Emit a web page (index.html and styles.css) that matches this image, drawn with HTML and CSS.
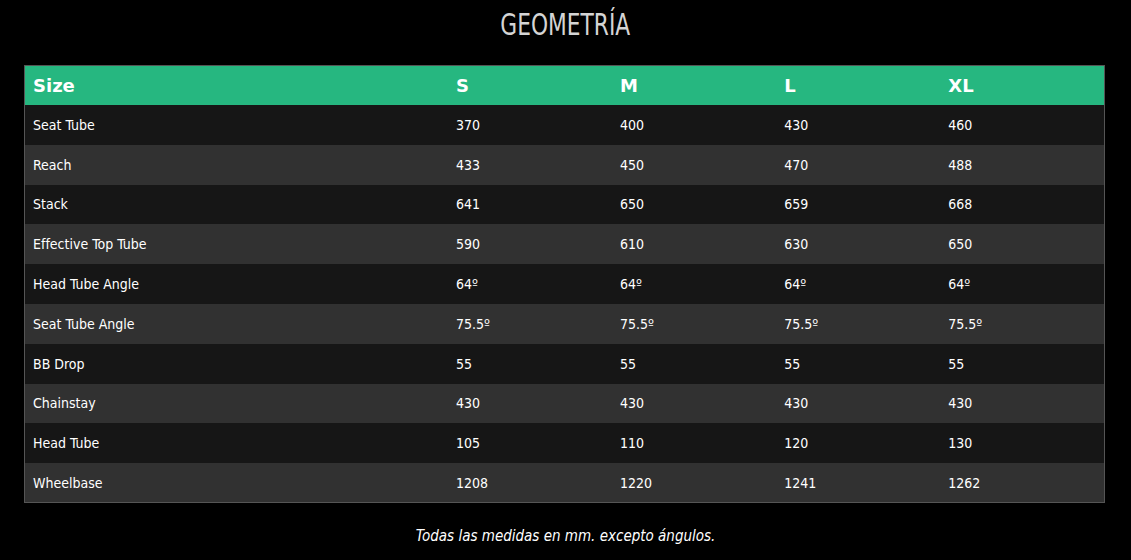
FILE: index.html
```html
<!DOCTYPE html>
<html lang="es">
<head>
<meta charset="utf-8">
<title>Geometría</title>
<link rel="stylesheet" href="styles.css">
</head>
<body>
<main class="page">
  <h2 class="title"><span class="title-text">GEOMETRÍA</span></h2>
  <table class="geo">
    <colgroup>
      <col class="c-name"><col class="c-size"><col class="c-size"><col class="c-size"><col class="c-size">
    </colgroup>
    <thead>
      <tr><th>Size</th><th>S</th><th>M</th><th>L</th><th>XL</th></tr>
    </thead>
    <tbody>
      <tr><td>Seat Tube</td><td>370</td><td>400</td><td>430</td><td>460</td></tr>
      <tr><td>Reach</td><td>433</td><td>450</td><td>470</td><td>488</td></tr>
      <tr><td>Stack</td><td>641</td><td>650</td><td>659</td><td>668</td></tr>
      <tr><td>Effective Top Tube</td><td>590</td><td>610</td><td>630</td><td>650</td></tr>
      <tr><td>Head Tube Angle</td><td>64º</td><td>64º</td><td>64º</td><td>64º</td></tr>
      <tr><td>Seat Tube Angle</td><td>75.5º</td><td>75.5º</td><td>75.5º</td><td>75.5º</td></tr>
      <tr><td>BB Drop</td><td>55</td><td>55</td><td>55</td><td>55</td></tr>
      <tr><td>Chainstay</td><td>430</td><td>430</td><td>430</td><td>430</td></tr>
      <tr><td>Head Tube</td><td>105</td><td>110</td><td>120</td><td>130</td></tr>
      <tr><td>Wheelbase</td><td>1208</td><td>1220</td><td>1241</td><td>1262</td></tr>
    </tbody>
  </table>
  <p class="note">Todas las medidas en mm. excepto ángulos.</p>
</main>
</body>
</html>
```
FILE: styles.css
```css
html, body {
  margin: 0;
  padding: 0;
  background: #000;
}
.page {
  width: 1131px;
}
.title {
  margin: 0;
  height: 65px;
  padding-top: 5px;
  box-sizing: border-box;
  text-align: center;
  font-family: "Liberation Sans Narrow", "DejaVu Sans Condensed", sans-serif;
  font-weight: normal;
  font-size: 31px;
  line-height: 38px;
  color: #d4d4d4;
}
.title-text {
  display: inline-block;
  transform: scaleX(0.78);
}
.geo {
  margin: 0 0 0 24px;
  width: 1081px;
  border-collapse: collapse;
  table-layout: fixed;
  border: 1px solid #555;
  font-family: "DejaVu Sans Condensed", "DejaVu Sans", sans-serif;
  color: #fff;
}
.c-name { width: 423px; }
.c-size { width: 164px; }
.geo th {
  background: #26b780;
  height: 39.5px;
  padding: 0 8px;
  text-align: left;
  font-size: 18px;
  font-weight: bold;
  font-family: "DejaVu Sans", sans-serif;
  box-sizing: border-box;
}
.geo td {
  height: 39.8px;
  padding: 0 8px;
  font-size: 14px;
  box-sizing: border-box;
}
.geo tbody tr:nth-child(odd) td { background: #161616; }
.geo tbody tr:nth-child(even) td { background: #313131; }
.note {
  margin: 24px 0 0 0;
  text-align: center;
  font-family: "DejaVu Sans Condensed", "Open Sans", sans-serif;
  font-style: italic;
  font-size: 15px;
  color: #fff;
}
```
